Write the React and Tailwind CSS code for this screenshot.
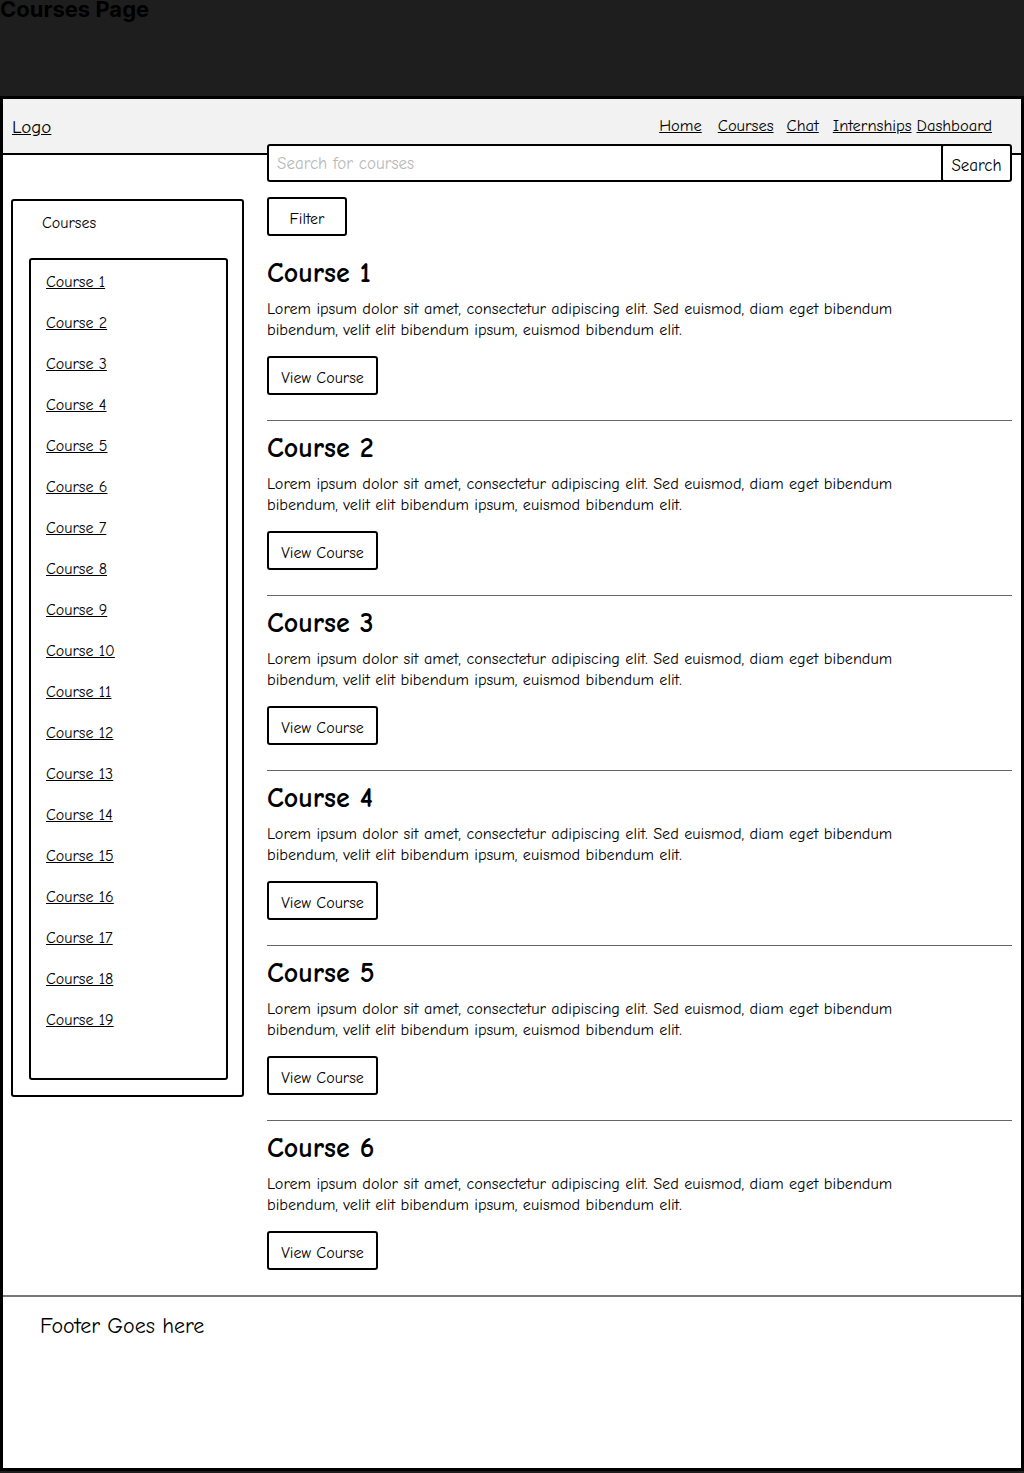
import React from "react";

const hand = { fontFamily: '"Comic Sans MS", "Comic Neue", "Open Sans", sans-serif' };

const navLinks = [
  { label: "Home", cls: "" },
  { label: "Courses", cls: "ml-[16px]" },
  { label: "Chat", cls: "ml-[13px]" },
  { label: "Internships", cls: "ml-[14px]" },
  { label: "Dashboard", cls: "ml-[5px]" },
];

const sideCourses = Array.from({ length: 19 }, (_, i) => `Course ${i + 1}`);
const courses = [1, 2, 3, 4, 5, 6];

const lorem =
  "Lorem ipsum dolor sit amet, consectetur adipiscing elit. Sed euismod, diam eget bibendum bibendum, velit elit bibendum ipsum, euismod bibendum elit.";

const CourseItem = ({ n, last }) => (
  <div>
    <h2 className="text-[28px] font-bold leading-[30px] text-black">Course {n}</h2>
    <p className="mt-[10px] max-w-[680px] text-[16.2px] leading-[21px] text-black">{lorem}</p>
    <button className="mt-[16px] h-[39px] w-[111px] rounded-[3px] border-2 border-black bg-white pt-[4px] text-[16px] text-black">
      View Course
    </button>
    {!last && <div className="mt-[25px] mb-[12px] h-px bg-[#666]" />}
  </div>
);

export default function App() {
  return (
    <div className="h-[1473px] w-full overflow-hidden bg-[#1e1e1e]">
      <div className="h-[96px]">
        <h1 className="relative -top-[4px] text-[22px] font-bold leading-[26px] text-black" style={{ fontFamily: "Inter, sans-serif" }}>
          Courses Page
        </h1>
      </div>
      <div className="flex h-[1375px] w-full flex-col border-[3px] border-black bg-white" style={hand}>
        <header className="flex h-[56px] shrink-0 items-center justify-between border-b-2 border-black bg-[#f2f2f2] pl-[9px] pr-[29px]">
          <a href="#" className="mt-[3px] text-[19px] text-black underline">
            Logo
          </a>
          <nav className="flex text-[16.5px] text-black">
            {navLinks.map((l) => (
              <a key={l.label} href="#" className={`underline ${l.cls}`}>
                {l.label}
              </a>
            ))}
          </nav>
        </header>

        <div className="flex">
          <aside className="ml-[8px] mt-[44px] w-[233px] shrink-0">
            <div className="rounded-[3px] border-2 border-black pb-[15px]">
              <div className="pl-[29px] pt-[12px] text-[16px] leading-[20px] text-black">Courses</div>
              <div className="ml-[16px] mr-[14px] mt-[25px] rounded-[3px] border-2 border-black pb-[47px] pl-[15px] pt-[12px]">
                <ul className="flex flex-col gap-[20px]">
                  {sideCourses.map((c) => (
                    <li key={c} className="text-[16px] leading-[21px] text-black">
                      <a href="#" className="underline">
                        {c}
                      </a>
                    </li>
                  ))}
                </ul>
              </div>
            </div>
          </aside>

          <main className="relative z-10 ml-[23px] -mt-[11px] w-[745px]">
            <div className="flex h-[38px]">
              <input
                type="text"
                placeholder="Search for courses"
                className="h-full flex-1 rounded-l-[3px] border-2 border-black bg-white px-[8px] text-[17px] text-black placeholder:text-[#b8b8b8] outline-none"
                style={hand}
              />
              <button className="-ml-[2px] h-full w-[71px] rounded-[3px] border-2 border-black bg-white pt-[6px] text-[17px] text-black">
                Search
              </button>
            </div>
            <button className="mt-[15px] h-[39px] w-[80px] rounded-[3px] border-2 border-black bg-white pt-[4px] text-[16px] text-black">
              Filter
            </button>
            <div className="mt-[22px]">
              {courses.map((n, i) => (
                <CourseItem key={n} n={n} last={i === courses.length - 1} />
              ))}
            </div>
          </main>
        </div>

        <footer className="mt-[25px] border-t-2 border-[#777] pl-[37px] pt-[16px]">
          <p className="text-[22px] leading-[26px] text-black">Footer Goes here</p>
        </footer>
      </div>
    </div>
  );
}
